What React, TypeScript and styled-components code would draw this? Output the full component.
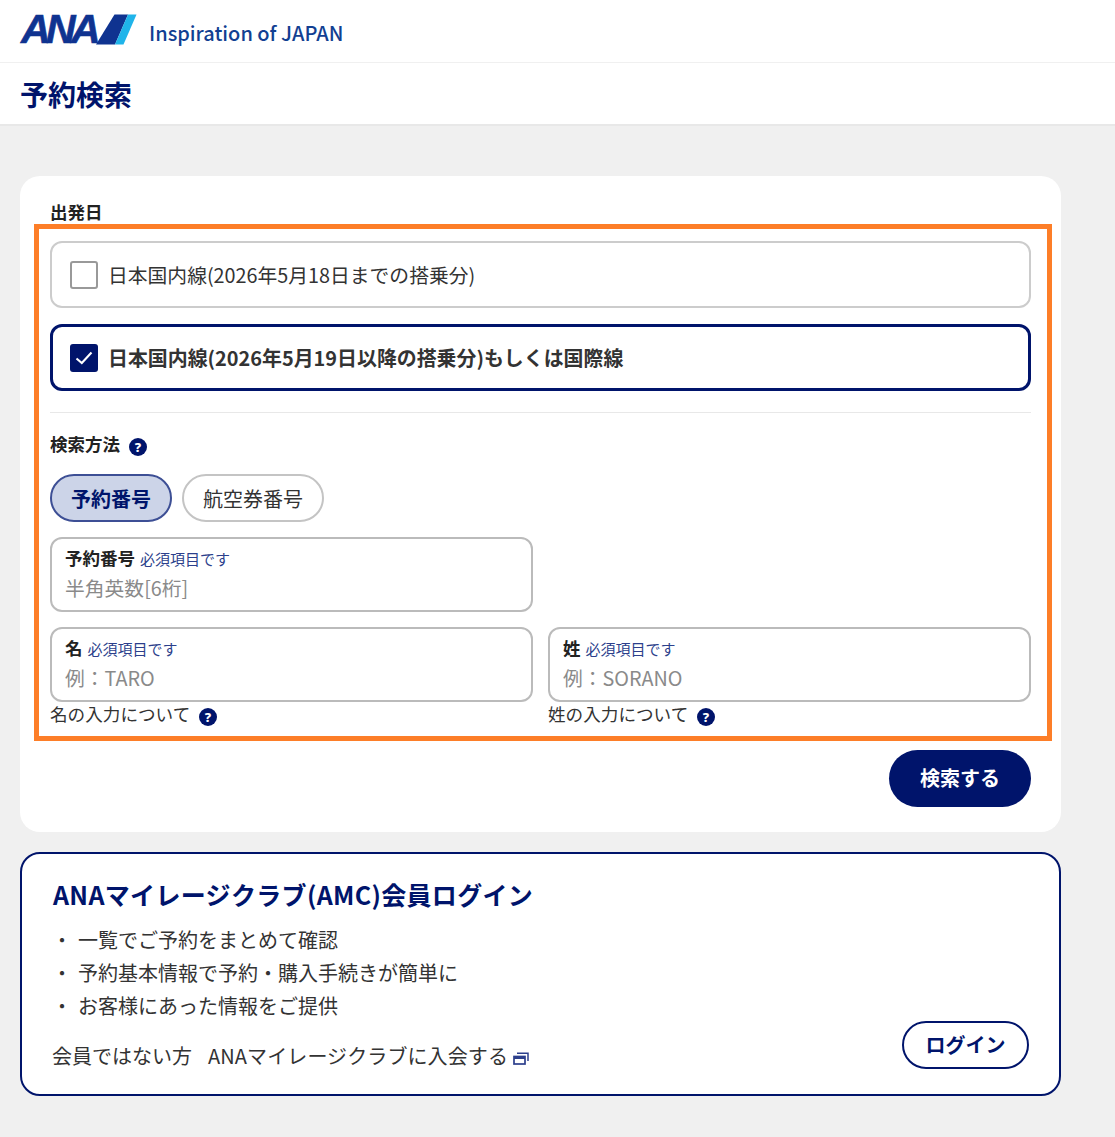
import React from "react";
import styled, { createGlobalStyle } from "styled-components";

const NAVY = "#00146b";
const FONT = `"Noto Sans CJK JP", "Noto Sans", sans-serif`;

const Global = createGlobalStyle`
  html, body { margin: 0; padding: 0; background: #f0f0f0; }
  body { font-family: ${FONT}; color: #333; }
  * { box-sizing: border-box; }
`;

const Page = styled.div`
  position: relative;
  width: 1115px;
  height: 1137px;
  overflow: hidden;
  background: #f0f0f0;
`;

const BrandBar = styled.header`
  height: 63px;
  background: #fff;
  border-bottom: 1px solid #f0f0f0;
  display: flex;
  align-items: center;
  padding: 0 0 0 21px;
`;

const Logo = styled.div`
  display: flex;
  align-items: center;
  width: 128px;
  height: 62px;
`;

const LogoWord = styled.span`
  font-family: "Liberation Sans", sans-serif;
  font-style: italic;
  font-weight: 700;
  font-size: 41px;
  line-height: 1;
  letter-spacing: -4.6px;
  color: #0f3390;
  width: 75px;
  -webkit-text-stroke: 0.6px #0f3390;
  margin-top: -4px;
`;

const Tagline = styled.span`
  font-size: 20px;
  font-weight: 500;
  color: #123f92;
  line-height: 1;
  margin-top: 3px;
`;

const TitleBar = styled.div`
  height: 63px;
  background: #fff;
  border-bottom: 2px solid #e8e8e8;
  display: flex;
  align-items: center;
  padding-left: 20px;
`;

const Title = styled.h1`
  margin: 0;
  font-size: 28px;
  font-weight: 700;
  color: ${NAVY};
  line-height: 1;
`;

const Main = styled.main`
  padding: 50px 54px 0 20px;
  display: flex;
  flex-direction: column;
  gap: 20px;
`;

const FormCard = styled.section`
  height: 656px;
  background: #fff;
  border-radius: 20px;
  padding: 24px 30px 0;
  display: flex;
  flex-direction: column;
`;

const GroupLabel = styled.div`
  font-size: 17.5px;
  font-weight: 700;
  color: #222;
  line-height: 24px;
  display: flex;
  align-items: center;
  gap: 9px;
`;

const CheckCard = styled.label<{ $on?: boolean }>`
  height: 67px;
  margin-top: ${(p) => (p.$on ? 16 : 17)}px;
  border-radius: 12px;
  border: ${(p) => (p.$on ? `3px solid ${NAVY}` : "2px solid #cccccc")};
  display: flex;
  align-items: center;
  gap: 10px;
  padding-left: ${(p) => (p.$on ? 17 : 18)}px;
  font-size: ${(p) => (p.$on ? 19.92 : 19.8)}px;
  font-weight: ${(p) => (p.$on ? 700 : 400)};
  color: #333;
  white-space: nowrap;
`;

const CheckBox = styled.span<{ $on?: boolean }>`
  width: 28px;
  height: 28px;
  border-radius: 3px;
  flex: none;
  display: flex;
  align-items: center;
  justify-content: center;
  background: ${(p) => (p.$on ? NAVY : "#fff")};
  border: ${(p) => (p.$on ? "none" : "2px solid #999")};
`;

const Divider = styled.hr`
  margin: 21px 0 0;
  border: 0;
  border-top: 1px solid #e8e8e8;
`;

const MethodLabel = styled(GroupLabel)`
  margin-top: 19px;
`;

const Pills = styled.div`
  display: flex;
  gap: 10px;
  margin-top: 18px;
`;

const Pill = styled.div<{ $on?: boolean }>`
  height: 48px;
  width: ${(p) => (p.$on ? 122 : 142)}px;
  border-radius: 24px;
  display: flex;
  align-items: center;
  justify-content: center;
  font-size: 20px;
  font-weight: ${(p) => (p.$on ? 700 : 400)};
  color: ${(p) => (p.$on ? NAVY : "#333")};
  background: ${(p) => (p.$on ? "#ccd4e8" : "#fff")};
  border: ${(p) => (p.$on ? `2px solid #3d4f95` : "2px solid #c4c4c4")};
`;

const FieldGrid = styled.div`
  display: grid;
  grid-template-columns: 483px 483px;
  column-gap: 15px;
  margin-top: 15px;
`;

const Field = styled.div`
  height: 75px;
  border: 2px solid #bbb;
  border-radius: 12px;
  padding: 6px 13px 0;
`;

const FieldHead = styled.div`
  display: flex;
  align-items: baseline;
  gap: 5px;
  height: 26px;
  line-height: 26px;
`;

const FieldName = styled.span`
  font-size: 17.5px;
  font-weight: 700;
  color: #222;
`;

const Required = styled.span`
  font-size: 15px;
  color: #2c3f8c;
`;

const Placeholder = styled.div`
  font-size: 19.8px;
  line-height: 28px;
  color: #8a8a8a;
  margin-top: 3px;
`;

const HelpLink = styled.div`
  display: flex;
  align-items: center;
  gap: 9px;
  font-size: 17.6px;
  line-height: 26px;
  color: #333;
  height: 26px;
  margin-top: -1px;
`;

const Spacer = styled.div``;

const Gap = styled.div`
  height: 15px;
  grid-column: 1 / -1;
`;

const Actions = styled.div`
  display: flex;
  justify-content: flex-end;
  margin-top: 23px;
`;

const SearchButton = styled.button`
  width: 142px;
  height: 57px;
  border: 0;
  padding: 0 0 2px;
  border-radius: 29px;
  background: ${NAVY};
  color: #fff;
  font-family: ${FONT};
  font-size: 20px;
  font-weight: 700;
`;

const LoginCard = styled.section`
  height: 244px;
  background: #fff;
  border: 2px solid ${NAVY};
  border-radius: 20px;
  padding: 22px 30px 0;
`;

const LoginTitle = styled.h2`
  margin: 0 0 0 1px;
  font-size: 25px;
  line-height: 36px;
  font-weight: 700;
  letter-spacing: 0.33px;
  color: ${NAVY};
  white-space: nowrap;
`;

const Benefits = styled.ul`
  list-style: none;
  margin: 11px 0 0;
  padding: 0;
`;

const Benefit = styled.li`
  font-size: 20px;
  line-height: 33px;
  color: #333;
  display: flex;
  &::before {
    content: "・";
    width: 26px;
    flex: none;
  }
`;

const JoinRow = styled.div`
  display: flex;
  align-items: flex-start;
  justify-content: space-between;
  margin-top: -1px;
`;

const JoinText = styled.div`
  font-size: 20px;
  line-height: 30px;
  color: #333;
  display: flex;
  align-items: center;
  gap: 16px;
  margin-top: 20px;
`;

const JoinLink = styled.span`
  display: flex;
  align-items: center;
  gap: 5px;
  letter-spacing: 0.1px;
`;

const LoginButton = styled.div`
  width: 127px;
  height: 48px;
  border: 2px solid ${NAVY};
  border-radius: 24px;
  background: #fff;
  color: ${NAVY};
  font-size: 20px;
  font-weight: 700;
  display: flex;
  align-items: center;
  justify-content: center;
  padding-bottom: 2px;
`;

const Highlight = styled.div`
  position: absolute;
  left: 34px;
  top: 224px;
  width: 1018px;
  height: 517px;
  border: 5px solid #fd7e28;
  pointer-events: none;
`;

const HelpBadge = styled.svg`
  flex: none;
  margin-top: 5px;
`;

const Help = () => (
  <HelpBadge width="18" height="18" viewBox="0 0 18 18">
    <circle cx="9" cy="9" r="9" fill={NAVY} />
    <text x="9" y="13.6" textAnchor="middle" fontFamily="'Noto Sans', sans-serif" fontWeight="800" fontSize="13" fill="#fff">?</text>
  </HelpBadge>
);

const Check = () => (
  <svg width="18" height="14" viewBox="0 0 18 14">
    <path d="M1.5 7.5 L6.8 12 L16.5 1.5" fill="none" stroke="#fff" strokeWidth="2.1" />
  </svg>
);

const ExternalGlyph = styled.svg`
  margin-top: 5px;
`;

const ExternalIcon = () => (
  <ExternalGlyph width="16" height="13" viewBox="0 0 16 13">
    <rect x="1" y="4.5" width="11" height="7.5" fill="none" stroke="#2c3f8c" strokeWidth="1.7" />
    <line x1="1" y1="6" x2="12" y2="6" stroke="#2c3f8c" strokeWidth="2" />
    <path d="M4 1.2 H15 V9" fill="none" stroke="#2c3f8c" strokeWidth="1.5" />
  </ExternalGlyph>
);

const LogoSlash = styled.svg`
  margin-top: -4px;
`;

export default function App() {
  return (
    <Page>
      <Global />
      <BrandBar>
        <Logo>
          <LogoWord>ANA</LogoWord>
          <LogoSlash width="41" height="31" viewBox="0 0 41 31">
            <polygon points="18.5,0.5 32,0.5 19,30.5 0,30.5" fill="#0f3390" />
            <polygon points="32,0.5 40.5,0.5 27.5,30.5 19,30.5" fill="#1fb4ea" />
          </LogoSlash>
        </Logo>
        <Tagline>Inspiration of JAPAN</Tagline>
      </BrandBar>
      <TitleBar>
        <Title>予約検索</Title>
      </TitleBar>
      <Main>
        <FormCard>
          <GroupLabel>出発日</GroupLabel>
          <CheckCard>
            <CheckBox />
            日本国内線(2026年5月18日までの搭乗分)
          </CheckCard>
          <CheckCard $on>
            <CheckBox $on>
              <Check />
            </CheckBox>
            日本国内線(2026年5月19日以降の搭乗分)もしくは国際線
          </CheckCard>
          <Divider />
          <MethodLabel>
            検索方法
            <Help />
          </MethodLabel>
          <Pills>
            <Pill $on>予約番号</Pill>
            <Pill>航空券番号</Pill>
          </Pills>
          <FieldGrid>
            <Field>
              <FieldHead>
                <FieldName>予約番号</FieldName>
                <Required>必須項目です</Required>
              </FieldHead>
              <Placeholder>半角英数[6桁]</Placeholder>
            </Field>
            <Spacer />
            <Gap />
            <Field>
              <FieldHead>
                <FieldName>名</FieldName>
                <Required>必須項目です</Required>
              </FieldHead>
              <Placeholder>例：TARO</Placeholder>
            </Field>
            <Field>
              <FieldHead>
                <FieldName>姓</FieldName>
                <Required>必須項目です</Required>
              </FieldHead>
              <Placeholder>例：SORANO</Placeholder>
            </Field>
            <HelpLink>
              名の入力について
              <Help />
            </HelpLink>
            <HelpLink>
              姓の入力について
              <Help />
            </HelpLink>
          </FieldGrid>
          <Actions>
            <SearchButton>検索する</SearchButton>
          </Actions>
        </FormCard>
        <LoginCard>
          <LoginTitle>ANAマイレージクラブ(AMC)会員ログイン</LoginTitle>
          <Benefits>
            <Benefit>一覧でご予約をまとめて確認</Benefit>
            <Benefit>予約基本情報で予約・購入手続きが簡単に</Benefit>
            <Benefit>お客様にあった情報をご提供</Benefit>
          </Benefits>
          <JoinRow>
            <JoinText>
              会員ではない方
              <JoinLink>
                ANAマイレージクラブに入会する
                <ExternalIcon />
              </JoinLink>
            </JoinText>
            <LoginButton>ログイン</LoginButton>
          </JoinRow>
        </LoginCard>
      </Main>
      <Highlight />
    </Page>
  );
}
